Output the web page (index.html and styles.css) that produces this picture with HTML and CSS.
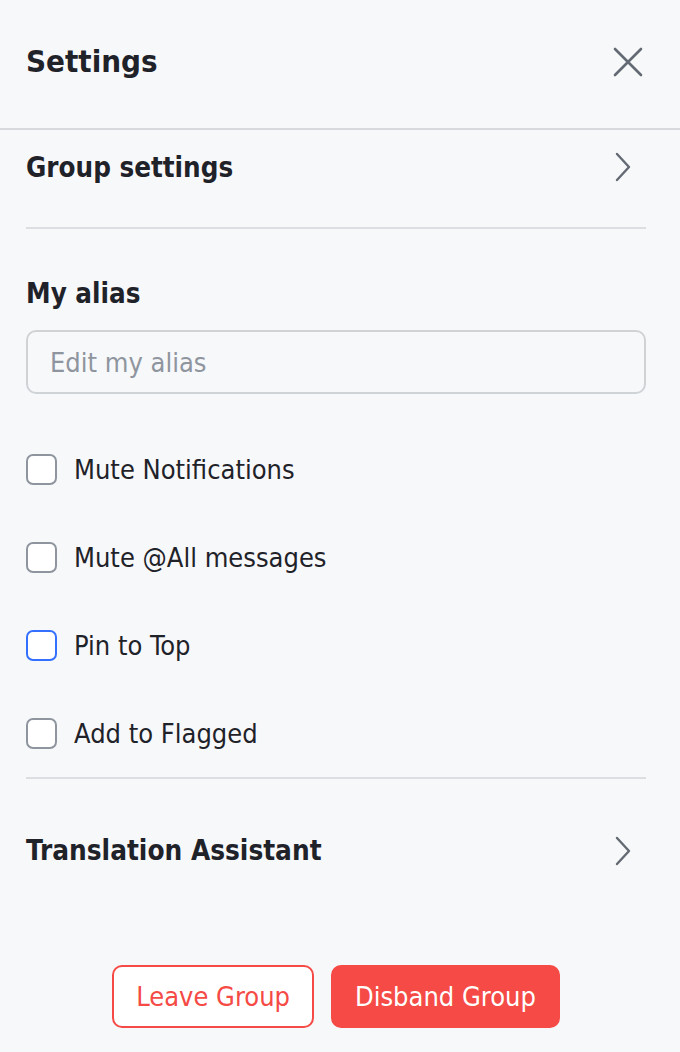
FILE: index.html
```html
<!DOCTYPE html>
<html>
<head>
    <title>Settings</title>
    <link rel="stylesheet" href="styles.css">
</head>
<body>
    <div class="panel">
        <div class="header">
            <h1 class="title">Settings</h1>
            <button class="close" aria-label="Close">
                <svg width="30" height="30" viewBox="0 0 30 30"><path d="M2 2 L28 28 M28 2 L2 28" stroke="#646a73" stroke-width="2.6" stroke-linecap="round" fill="none"/></svg>
            </button>
        </div>

        <div class="content">
            <div class="nav-row first">
                <span class="section-title">Group settings</span>
                <svg class="chevron" width="16" height="30" viewBox="0 0 16 30"><path d="M2 2 L14 15 L2 28" stroke="#646a73" stroke-width="2.4" stroke-linecap="round" stroke-linejoin="round" fill="none"/></svg>
            </div>
            <div class="divider"></div>

            <div class="alias">
                <div class="section-title">My alias</div>
                <input class="alias-input" type="text" placeholder="Edit my alias">
            </div>

            <div class="options">
                <label class="option"><span class="box"></span>Mute Notifications</label>
                <label class="option"><span class="box"></span>Mute @All messages</label>
                <label class="option"><span class="box focused"></span>Pin to Top</label>
                <label class="option"><span class="box"></span>Add to Flagged</label>
            </div>
            <div class="divider"></div>

            <div class="nav-row second">
                <span class="section-title large">Translation Assistant</span>
                <svg class="chevron" width="16" height="30" viewBox="0 0 16 30"><path d="M2 2 L14 15 L2 28" stroke="#646a73" stroke-width="2.4" stroke-linecap="round" stroke-linejoin="round" fill="none"/></svg>
            </div>

            <div class="actions">
                <button class="btn btn-outline">Leave Group</button>
                <button class="btn btn-danger">Disband Group</button>
            </div>
        </div>
    </div>
</body>
</html>
```

FILE: styles.css
```css
body {
    margin: 0;
    background-color: #f7f8fa;
    color: #1f2329;
    font-family: "DejaVu Sans Condensed", "DejaVu Sans", sans-serif;
    font-stretch: condensed;
}

.panel {
    width: 680px;
    min-height: 1052px;
}

.header {
    height: 130px;
    border-bottom: 2px solid #d8d9dc;
    display: flex;
    align-items: center;
    justify-content: space-between;
    padding: 0 37px 0 26px;
    box-sizing: border-box;
}

.title {
    margin: 0;
    font-size: 31px;
    font-weight: bold;
    padding-bottom: 6px;
}

.close {
    border: none;
    background: none;
    padding: 0;
    width: 30px;
    height: 30px;
    margin-bottom: 4px;
    cursor: pointer;
}

.content {
    padding: 0 34px 0 26px;
}

.section-title {
    font-size: 27.5px;
    font-weight: bold;
}

.section-title.large {
    font-size: 27.7px;
}

.nav-row {
    display: flex;
    align-items: center;
    justify-content: space-between;
    padding-right: 15px;
}

.nav-row.first {
    height: 73px;
    margin-bottom: 24px;
}

.nav-row.second {
    height: 143px;
    padding-bottom: 2px;
}

.divider {
    height: 2px;
    background-color: #dcdee1;
}

.alias {
    padding-top: 48px;
}

.alias-input {
    display: block;
    width: 100%;
    box-sizing: border-box;
    height: 64px;
    margin-top: 21px;
    border: 2px solid #d0d3d6;
    border-radius: 10px;
    background-color: #f7f8fa;
    padding: 0 22px;
    font-family: inherit;
    font-stretch: condensed;
    font-size: 27px;
    color: #1f2329;
}

.alias-input::placeholder {
    color: #8f959e;
}

.options {
    padding-top: 31px;
}

.option {
    display: flex;
    align-items: center;
    height: 88px;
    font-size: 27px;
    cursor: pointer;
}

.box {
    width: 31px;
    height: 31px;
    box-sizing: border-box;
    border: 2px solid #8f959e;
    border-radius: 7px;
    background-color: #fff;
    margin-right: 17px;
    flex-shrink: 0;
}

.box.focused {
    border-color: #3370ff;
}

.actions {
    display: flex;
    justify-content: center;
    gap: 17px;
    padding-top: 41px;
}

.btn {
    height: 63px;
    border-radius: 10px;
    font-family: inherit;
    font-stretch: condensed;
    font-size: 27px;
    padding: 0 22px;
    cursor: pointer;
}

.btn-outline {
    background-color: #fff;
    border: 2px solid #f54a45;
    color: #f54a45;
}

.btn-danger {
    background-color: #f54a45;
    border: 2px solid #f54a45;
    color: #fff;
}
```
